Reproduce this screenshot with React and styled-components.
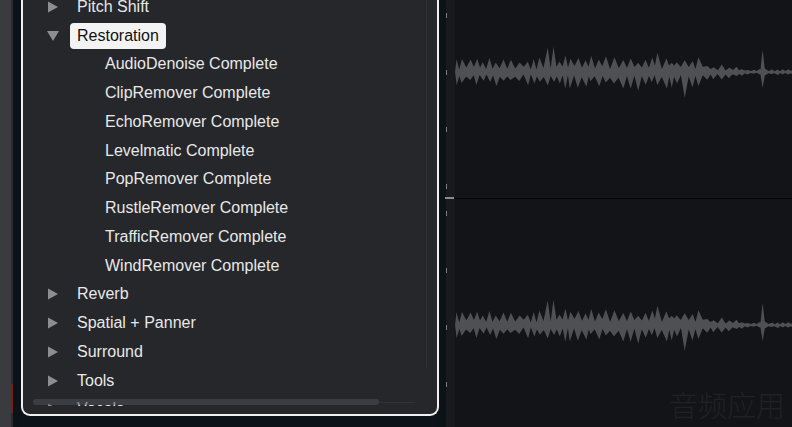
import React from "react";
import styled, { createGlobalStyle } from "styled-components";

const Global = createGlobalStyle`
  html, body { margin: 0; padding: 0; background: #131417; }
  body { font-family: "Liberation Sans", Arial, sans-serif; }
`;

const Screen = styled.div`
  display: flex;
  width: 792px;
  height: 427px;
  overflow: hidden;
  background: #131417;
  position: relative;
`;

const SideGutter = styled.div`
  width: 12px;
  background: #3a3b3e;
  border-right: 2px solid #2b2c2f;
  display: flex;
  flex-direction: column;
  align-items: flex-end;
`;

const RedMark = styled.div`
  margin-top: auto;
  margin-bottom: 14px;
  margin-right: -2px;
  width: 2px;
  height: 29px;
  background: #7c1b1b;
`;

const NavyStrip = styled.div`
  width: ${(p) => p.$w}px;
  background: #0b1218;
  flex: none;
`;

const BrowserColumn = styled.div`
  width: 418px;
  flex: none;
  display: flex;
  flex-direction: column;
  background: #0d1419;
`;

const Panel = styled.div`
  height: 416px;
  box-sizing: border-box;
  border: 2px solid #f1f1f1;
  border-top: none;
  border-radius: 0 0 9px 9px;
  background: #25272b;
  display: flex;
  padding-bottom: 8px;
`;

const ListViewport = styled.div`
  flex: 1;
  overflow: hidden;
  position: relative;
`;

const List = styled.div`
  margin-top: -7.4px;
  display: flex;
  flex-direction: column;
`;

const Row = styled.div`
  height: 28.75px;
  display: flex;
  align-items: center;
  padding-left: ${(p) => (p.$child ? 82 : 24)}px;
  font-size: 16px;
  color: #e8e8e8;
  white-space: nowrap;
`;

const Toggle = styled.div`
  width: 23px;
  display: flex;
  align-items: center;
`;

const Label = styled.span`
  display: inline-flex;
  align-items: center;
  height: 26px;
  padding: 0 7px;
  border-radius: 4px;
  background: ${(p) => (p.$selected ? "#f3f3f3" : "transparent")};
  color: ${(p) => (p.$selected ? "#111" : "#e8e8e8")};
`;

const ChildLabel = styled.span`
  color: #e8e8e8;
`;

const HScrollThumb = styled.div`
  position: absolute;
  left: 10px;
  bottom: 1px;
  width: 346px;
  height: 6px;
  border-radius: 3px;
  background: rgba(78, 80, 85, 0.55);
`;

const HScrollTrack = styled.div`
  position: absolute;
  left: 356px;
  bottom: 3px;
  width: 36px;
  height: 1px;
  background: #303236;
`;

const VScrollTrack = styled.div`
  width: 10px;
  height: 368px;
  border-left: 1px solid #2e3034;
  flex: none;
`;

const Ruler = styled.div`
  width: 9px;
  flex: none;
  display: flex;
  flex-direction: column;
  background: #191a1d;
`;

const RulerSection = styled.div`
  height: ${(p) => p.$h}px;
  padding-top: ${(p) => p.$top}px;
  box-sizing: border-box;
  display: flex;
  flex-direction: column;
  gap: 52px;
  border-left: 1px solid #0b1218;
`;

const Tick = styled.div`
  width: 1px;
  height: 5px;
  background: #7d7e82;
`;

const RulerDivider = styled.div`
  height: 2px;
  background: #8a8b8f;
`;

const WaveArea = styled.div`
  flex: 1;
  display: flex;
  flex-direction: column;
  background: #131417;
  border-left: 1px solid #17181b;
`;

const Track = styled.div`
  height: ${(p) => (p.$h ? `${p.$h}px` : "auto")};
  flex: ${(p) => (p.$h ? "none" : 1)};
  box-sizing: border-box;
  padding-top: ${(p) => p.$top}px;
  border-bottom: ${(p) => (p.$divider ? "1px solid #050506" : "none")};
`;

const WaveSvg = styled.svg`
  display: block;
`;

const Watermark = styled.div`
  position: absolute;
  right: 7px;
  bottom: 2px;
  font-family: "Noto Sans CJK SC", sans-serif;
  font-weight: 300;
  font-size: 29px;
  color: #202124;
`;

function mulberry32(a) {
  return function () {
    a |= 0;
    a = (a + 0x6d2b79f5) | 0;
    let t = Math.imul(a ^ (a >>> 15), 1 | a);
    t = (t + Math.imul(t ^ (t >>> 7), 61 | t)) ^ t;
    return ((t ^ (t >>> 14)) >>> 0) / 4294967296;
  };
}

const C = 32;

function envelope(x) {
  // returns [peakUp, peakDown, body]
  if (x < 85) return [13, 13, 4];
  if (x < 170) return [16, 15, 5];
  if (x < 245) return [14, 16, 5];
  if (x < 300) {
    const k = 1 - (x - 245) / 55;
    return [2 + 8 * k, 2 + 8 * k, 1 + 2 * k];
  }
  return [3, 3, 1];
}

function buildWave() {
  const rand = mulberry32(5);
  const upper = [[0, C]];
  const lower = [[0, C]];
  let x = 1.5;
  while (x < 337) {
    const [pu, pd, body] = envelope(x);
    let up = pu * (0.6 + rand() * 0.55);
    let down = pd * (0.6 + rand() * 0.55);
    if (x > 80 && x < 225 && rand() < 0.2) up *= 1.55;
    if (x > 150 && x < 245 && rand() < 0.15) down *= 1.45;
    const step = x > 245 ? 5 + rand() * 3 : 4.5 + rand() * 4.5;
    const off = (rand() - 0.5) * 1.6;
    upper.push([x, C - up]);
    lower.push([x + off, C + down]);
    const vx = x + step / 2;
    upper.push([vx, C - body * (0.6 + rand() * 0.7)]);
    lower.push([vx + off / 2, C + body * (0.6 + rand() * 0.7)]);
    x += step;
  }
  upper.push([337, C - 2]);
  lower.push([337, C + 2]);
  const addSpike = (arr, sign, h) => {
    const out = arr.filter((p) => p[0] < 305 || p[0] > 311);
    const idx = out.findIndex((p) => p[0] > 308);
    out.splice(idx, 0, [305.5, C + sign * 2.5], [307.6, C + sign * h], [309.8, C + sign * 3.5]);
    return out;
  };
  const U = addSpike(upper, -1, 22);
  const L = addSpike(lower, 1, 16);
  let d = `M0 ${C} `;
  U.forEach(([px, py]) => (d += `L${px.toFixed(1)} ${py.toFixed(1)} `));
  L.slice()
    .reverse()
    .forEach(([px, py]) => (d += `L${px.toFixed(1)} ${py.toFixed(1)} `));
  return d + "Z";
}

const WAVE = buildWave();

function Waveform() {
  return (
    <WaveSvg width="337" height="64" viewBox="0 0 337 64">
      <path d={WAVE} fill="#4f5054" />
    </WaveSvg>
  );
}

function Caret({ open }) {
  return (
    <svg width="12" height="12" viewBox="0 0 12 12">
      {open ? (
        <path d="M0 1 L12 1 L6 11 Z" fill="#8d8e92" />
      ) : (
        <path d="M1 0.5 L11 6 L1 11.5 Z" fill="#8d8e92" />
      )}
    </svg>
  );
}

const before = ["Pitch Shift"];
const children = [
  "AudioDenoise Complete",
  "ClipRemover Complete",
  "EchoRemover Complete",
  "Levelmatic Complete",
  "PopRemover Complete",
  "RustleRemover Complete",
  "TrafficRemover Complete",
  "WindRemover Complete",
];
const after = ["Reverb", "Spatial + Panner", "Surround", "Tools", "Vocals"];

export default function App() {
  return (
    <>
      <Global />
      <Screen>
        <SideGutter>
          <RedMark />
        </SideGutter>
        <NavyStrip $w={8} />
        <BrowserColumn>
          <Panel>
            <ListViewport>
              <List>
                {before.map((t) => (
                  <Row key={t}>
                    <Toggle>
                      <Caret />
                    </Toggle>
                    <Label>{t}</Label>
                  </Row>
                ))}
                <Row>
                  <Toggle>
                    <Caret open />
                  </Toggle>
                  <Label $selected>Restoration</Label>
                </Row>
                {children.map((t) => (
                  <Row key={t} $child>
                    <ChildLabel>{t}</ChildLabel>
                  </Row>
                ))}
                {after.map((t) => (
                  <Row key={t}>
                    <Toggle>
                      <Caret />
                    </Toggle>
                    <Label>{t}</Label>
                  </Row>
                ))}
              </List>
              <HScrollThumb />
              <HScrollTrack />
            </ListViewport>
            <VScrollTrack />
          </Panel>
        </BrowserColumn>
        <NavyStrip $w={6} />
        <Ruler>
          <RulerSection $h={197} $top={13}>
            <Tick />
            <Tick />
            <Tick />
            <Tick />
          </RulerSection>
          <RulerDivider />
          <RulerSection $h={228} $top={12}>
            <Tick />
            <Tick />
            <Tick />
            <Tick />
          </RulerSection>
        </Ruler>
        <WaveArea>
          <Track $h={199} $top={40} $divider>
            <Waveform />
          </Track>
          <Track $top={94}>
            <Waveform />
          </Track>
        </WaveArea>
        <Watermark>音频应用</Watermark>
      </Screen>
    </>
  );
}
